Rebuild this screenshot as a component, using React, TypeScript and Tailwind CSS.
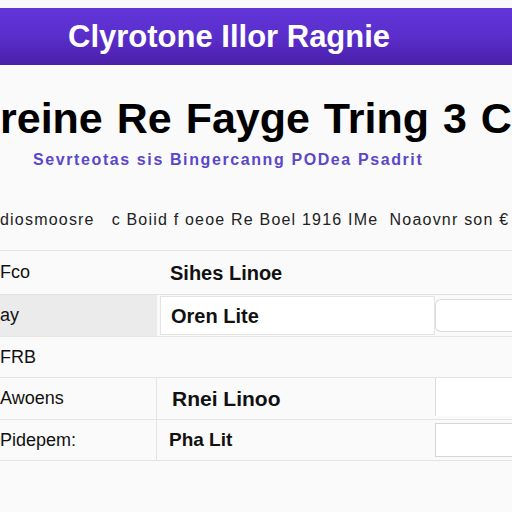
export default function App() {
  return (
    <div className="w-[512px] h-[512px] overflow-hidden bg-[#fafafa] text-[#111] font-['Liberation_Sans',Arial,sans-serif]">
      {/* top bar */}
      <div className="mt-2 h-[57px] flex items-center pl-[68px] bg-gradient-to-b from-[#6236d8] via-[#5a2ecb] to-[#4a1fa9]">
        <span className="text-white font-bold text-[31px] leading-none whitespace-nowrap">
          Clyrotone Illor Ragnie
        </span>
      </div>

      <h1 className="mt-[32px] text-[43px] font-bold leading-none whitespace-nowrap text-black [word-spacing:2px]">
        reine Re Fayge Tring 3 C
      </h1>

      <p className="mt-[12px] pl-[33px] text-[16px] font-bold leading-none tracking-[1.6px] text-[#5a48c8] whitespace-nowrap">
        Sevrteotas sis Bingercanng PODea Psadrit
      </p>

      <p className="mt-[44px] text-[16px] leading-none tracking-[1.2px] text-[#222] whitespace-nowrap">
        diosmoosre&nbsp;&nbsp; c Boiid f oeoe Re Boel 1916 IMe&nbsp; Noaovnr son €
      </p>

      {/* table */}
      <div className="mt-[22px] border-t border-[#e4e4e4]">
        <div className="grid grid-cols-[157px_1fr_77px] h-[44px] border-b border-[#e2e2e2] items-center">
          <span className="text-[18px]">Fco</span>
          <span className="pl-[13px] text-[20px] font-bold">Sihes Linoe</span>
          <span />
        </div>

        <div className="grid grid-cols-[157px_1fr_77px] h-[42px] border-b border-[#e6e6e6]">
          <div className="bg-[#ebebeb] flex items-center text-[18px]">ay</div>
          <div className="ml-[3px] my-[1px] border border-[#e4e4e4] bg-white flex items-center pl-[10px] text-[20px] font-bold">
            Oren Lite
          </div>
          <div className="flex items-center">
            <div className="w-full h-[33px] rounded-l-md border border-r-0 border-[#dcdcdc] bg-white" />
          </div>
        </div>

        <div className="h-[41px] flex items-center border-b border-[#e4e4e4] text-[18px]">FRB</div>

        <div className="grid grid-cols-[157px_1fr_77px] h-[42px] border-b border-[#e4e4e4]">
          <div className="flex items-center border-r border-[#e4e4e4] text-[18px]">Awoens</div>
          <div className="flex items-center pl-[15px] text-[21px] font-bold">Rnei Linoo</div>
          <div className="flex">
            <div className="w-full h-[38px] border-l border-[#dcdcdc] bg-white" />
          </div>
        </div>

        <div className="grid grid-cols-[157px_1fr_77px] h-[41px] border-b border-[#e4e4e4]">
          <div className="flex items-center border-r border-[#e4e4e4] text-[18px]">Pidepem:</div>
          <div className="flex items-center pl-[12px] text-[19px] font-bold">Pha Lit</div>
          <div className="flex items-center">
            <div className="w-full h-[34px] border border-r-0 border-[#d6d6d6] bg-white" />
          </div>
        </div>
      </div>
    </div>
  );
}
